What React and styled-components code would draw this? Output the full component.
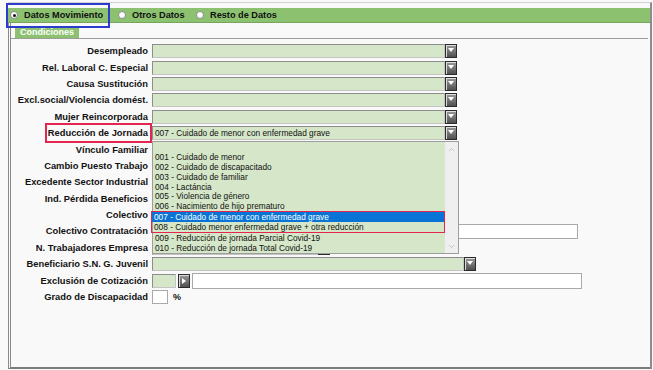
import React from 'react';
import styled, { createGlobalStyle } from 'styled-components';
import { ChevronUp, ChevronDown } from 'lucide-react';

const GlobalStyle = createGlobalStyle`
  html, body {
    margin: 0;
    padding: 0;
    background: #f9f9f9;
  }
  body {
    font-family: "Liberation Sans", Arial, sans-serif;
    color: #111;
  }
`;

const Screen = styled.div`
  width: 653px;
  height: 370px;
  padding-top: 2px;
  box-sizing: border-box;
  overflow: hidden;
`;

const Frame = styled.div`
  margin-left: 8px;
  width: 644px;
  height: 367px;
  box-sizing: border-box;
  border-top: 1px solid #d2d2d2;
  border-right: 2px solid #8c8c8c;
  padding-top: 5px;
  display: flex;
  flex-direction: column;
`;

const RadioBar = styled.div`
  height: 14px;
  background: #8cc170;
  border-bottom: 1px solid #76a65e;
  display: flex;
  align-items: stretch;
  padding-left: 2px;
`;

const RadioItem = styled.div`
  position: relative;
  width: ${p => p.$w}px;
  display: flex;
  align-items: center;
  gap: 6px;
  font-size: 9.2px;
  font-weight: 700;
  color: #111;
  white-space: nowrap;

  ${p => p.$marked && `
    &::after {
      content: '';
      position: absolute;
      top: -5px;
      bottom: -6px;
      left: -4px;
      right: 8px;
      border: 2px solid #2b3ccc;
    }
  `}
`;

const RadioDot = styled.span`
  width: 8px;
  height: 8px;
  box-sizing: border-box;
  border-radius: 50%;
  background: #fff;
  border: 1px solid #8a8a8a;
  display: flex;
  align-items: center;
  justify-content: center;

  &::before {
    content: '';
    width: 3px;
    height: 3px;
    border-radius: 50%;
    background: ${p => (p.$on ? '#111' : 'transparent')};
  }
`;

const Panel = styled.div`
  flex: 1;
  border-left: 3px double #8a8a8a;
  border-bottom: 2px solid #7b7b7b;
  padding-top: 4px;
  display: flex;
  flex-direction: column;
`;

const TabStrip = styled.div`
  display: flex;
  padding-left: 4px;
  margin-right: 2px;
  border-bottom: 1px solid #9c9c9c;
`;

const Tab = styled.div`
  height: 11px;
  line-height: 11px;
  padding: 0 5px;
  background: #8cc170;
  color: #fff;
  font-size: 9px;
  font-weight: 700;
`;

const Form = styled.div`
  display: grid;
  grid-template-columns: 137px 1fr;
  grid-auto-rows: 16.4px;
  column-gap: 4px;
  margin-top: 4px;
  align-items: center;
`;

const Label = styled.div`
  text-align: right;
  font-size: 9.35px;
  font-weight: 700;
  color: #111;
  white-space: nowrap;
`;

const LabelText = styled.span`
  position: relative;

  ${p => p.$marked && `
    &::after {
      content: '';
      position: absolute;
      top: -5px;
      bottom: -5px;
      left: -3px;
      right: -4px;
      border: 2px solid #e2264f;
    }
  `}
`;

const Field = styled.div`
  position: relative;
  display: flex;
  align-items: center;
  gap: ${p => p.$gap || 0}px;
  height: 100%;
`;

const Input = styled.div`
  width: ${p => p.$w}px;
  height: ${p => p.$h || 14}px;
  box-sizing: border-box;
  background: ${p => (p.$white ? '#fff' : '#d5e7c8')};
  border: 1px solid;
  border-color: ${p => (p.$white ? '#a9a9a9' : '#8d8d8d #c4c4c4 #c4c4c4 #8d8d8d')};
  font-size: 8.3px;
  line-height: 12px;
  padding-left: 2px;
  color: #111;
  white-space: nowrap;
  overflow: hidden;
`;

const DropButton = styled.span`
  width: 12px;
  height: 14px;
  box-sizing: border-box;
  border: 1px solid #2b2b2b;
  background: linear-gradient(to bottom, #9a9a9a, #505050);
  box-shadow: inset 1px 1px 0 #dcdcdc;
  display: flex;
  align-items: ${p => (p.$right ? 'center' : 'flex-start')};
  justify-content: center;
  padding-top: ${p => (p.$right ? 0 : 3)}px;
`;

const Percent = styled.span`
  margin-left: 5px;
  font-size: 9px;
  font-weight: 700;
`;

const Popup = styled.div`
  position: absolute;
  left: 0;
  top: 16px;
  z-index: 5;
  width: 307px;
  height: 113px;
  box-sizing: border-box;
  background: #d5e7c8;
  border: 1px solid #9d9d9d;
  display: flex;
`;

const ListBody = styled.div`
  flex: 1;
  padding-top: 10px;
  display: flex;
  flex-direction: column;
`;

const Item = styled.div`
  height: 10px;
  line-height: 10px;
  font-size: 8.3px;
  padding-left: 2px;
  white-space: nowrap;
  overflow: hidden;
  color: ${p => (p.$selected ? '#fff' : '#111')};
  background: ${p => (p.$selected ? '#0a74d6' : 'transparent')};
`;

const MarkedGroup = styled.div`
  margin-left: -2px;
  border: 1.5px solid #e2264f;
`;

const ScrollTrack = styled.div`
  width: 13px;
  background: #efefef;
  display: flex;
  flex-direction: column;
  justify-content: space-between;
  align-items: center;
  padding: 3px 0 2px;
  color: #b3b3b3;
`;

const DownTriangle = () => (
  <svg width="6" height="4" viewBox="0 0 6 4">
    <path d="M0 0 H6 L3 4 Z" fill="#fff" />
  </svg>
);

const RightTriangle = () => (
  <svg width="4" height="6" viewBox="0 0 4 6">
    <path d="M0 0 V6 L4 3 Z" fill="#fff" />
  </svg>
);

const Combo = ({ w = 293, children }) => (
  <>
    <Input $w={w}>{children}</Input>
    <DropButton><DownTriangle /></DropButton>
  </>
);

const options = [
  '001 - Cuidado de menor',
  '002 - Cuidado de discapacitado',
  '003 - Cuidado de familiar',
  '004 - Lactáncia',
  '005 - Violencia de género',
  '006 - Nacimiento de hijo prematuro',
  '007 - Cuidado de menor con enfermedad grave',
  '008 - Cuidado menor enfermedad grave + otra reducción',
  '009 - Reducción de jornada Parcial Covid-19',
  '010 - Reducción de jornada Total Covid-19',
];

const ReduccionList = () => (
  <Popup>
    <ListBody>
      {options.slice(0, 6).map(o => <Item key={o}>{o}</Item>)}
      <MarkedGroup>
        <Item $selected>{options[6]}</Item>
        <Item>{options[7]}</Item>
      </MarkedGroup>
      {options.slice(8).map(o => <Item key={o}>{o}</Item>)}
    </ListBody>
    <ScrollTrack>
      <ChevronUp size={9} strokeWidth={2} />
      <ChevronDown size={9} strokeWidth={2} />
    </ScrollTrack>
  </Popup>
);

const Row = ({ label, marked, children, gap }) => (
  <>
    <Label><LabelText $marked={marked}>{label}</LabelText></Label>
    <Field $gap={gap}>{children}</Field>
  </>
);

const App = () => {
  return (
    <>
      <GlobalStyle />
      <Screen>
        <Frame>
          <RadioBar>
            <RadioItem $w={108} $marked><RadioDot $on />Datos Movimiento</RadioItem>
            <RadioItem $w={78}><RadioDot />Otros Datos</RadioItem>
            <RadioItem $w={100}><RadioDot />Resto de Datos</RadioItem>
          </RadioBar>

          <Panel>
            <TabStrip>
              <Tab>Condiciones</Tab>
            </TabStrip>

            <Form>
              <Row label="Desempleado"><Combo /></Row>
              <Row label="Rel. Laboral C. Especial"><Combo /></Row>
              <Row label="Causa Sustitución"><Combo /></Row>
              <Row label="Excl.social/Violencia domést."><Combo /></Row>
              <Row label="Mujer Reincorporada"><Combo /></Row>
              <Row label="Reducción de Jornada" marked>
                <Combo>007 - Cuidado de menor con enfermedad grave</Combo>
                <ReduccionList />
              </Row>
              <Row label="Vínculo Familiar" />
              <Row label="Cambio Puesto Trabajo" />
              <Row label="Excedente Sector Industrial" />
              <Row label="Ind. Pérdida Beneficios" />
              <Row label="Colectivo" />
              <Row label="Colectivo Contratación"><Input $w={426} $h={15} $white /></Row>
              <Row label="N. Trabajadores Empresa"><Combo w={166} /></Row>
              <Row label="Beneficiario S.N. G. Juvenil"><Combo w={312} /></Row>
              <Row label="Exclusión de Cotización" gap={2}>
                <Input $w={24} />
                <DropButton $right><RightTriangle /></DropButton>
                <Input $w={390} $h={16} $white />
              </Row>
              <Row label="Grado de Discapacidad">
                <Input $w={16} $white />
                <Percent>%</Percent>
              </Row>
            </Form>
          </Panel>
        </Frame>
      </Screen>
    </>
  );
};

export default App;
